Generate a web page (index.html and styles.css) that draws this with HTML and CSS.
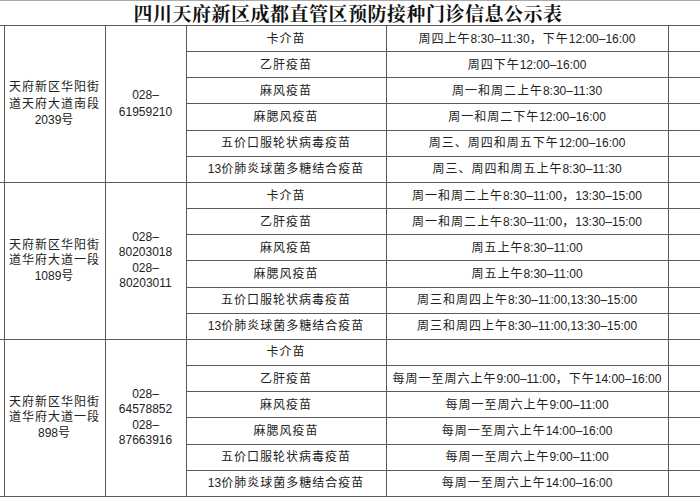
FILE: index.html
```html
<!DOCTYPE html>
<html lang="zh-CN">
<head>
<meta charset="utf-8">
<title>四川天府新区成都直管区预防接种门诊信息公示表</title>
<link rel="stylesheet" href="styles.css">
</head>
<body>
<div class="title">四川天府新区成都直管区预防接种门诊信息公示表</div>
<table class="grid">
<colgroup>
<col class="c0"><col class="c1"><col class="c2"><col class="c3"><col class="c4"><col class="c5">
</colgroup>
<tbody>
<tr class="gs">
<td class="pad" rowspan="6"></td>
<td class="addr a1" rowspan="6">天府新区华阳街<br>道天府大道南段<br><span class="n">2039</span>号</td>
<td class="tel t1" rowspan="6"><span class="n">028–<br>61959210</span></td>
<td>卡介苗</td><td>周四上午<span class="n">8:30–11:30</span>，下午<span class="n">12:00–16:00</span></td><td></td>
</tr>
<tr><td>乙肝疫苗</td><td>周四下午<span class="n">12:00–16:00</span></td><td></td></tr>
<tr><td>麻风疫苗</td><td>周一和周二上午<span class="n">8:30–11:30</span></td><td></td></tr>
<tr><td>麻腮风疫苗</td><td>周一和周二下午<span class="n">12:00–16:00</span></td><td></td></tr>
<tr><td>五价口服轮状病毒疫苗</td><td>周三、周四和周五下午<span class="n">12:00–16:00</span></td><td></td></tr>
<tr><td><span class="n">13</span>价肺炎球菌多糖结合疫苗</td><td>周三、周四和周五上午<span class="n">8:30–11:30</span></td><td></td></tr>

<tr class="gs">
<td class="pad" rowspan="6"></td>
<td class="addr" rowspan="6">天府新区华阳街<br>道华府大道一段<br><span class="n">1089</span>号</td>
<td class="tel" rowspan="6"><span class="n">028–<br>80203018<br>028–<br>80203011</span></td>
<td>卡介苗</td><td>周一和周二上午<span class="n">8:30–11:00</span>，<span class="n">13:30–15:00</span></td><td></td>
</tr>
<tr><td>乙肝疫苗</td><td>周一和周二上午<span class="n">8:30–11:00</span>，<span class="n">13:30–15:00</span></td><td></td></tr>
<tr><td>麻风疫苗</td><td>周五上午<span class="n">8:30–11:00</span></td><td></td></tr>
<tr><td>麻腮风疫苗</td><td>周五上午<span class="n">8:30–11:00</span></td><td></td></tr>
<tr><td>五价口服轮状病毒疫苗</td><td>周三和周四上午<span class="n">8:30–11:00,13:30–15:00</span></td><td></td></tr>
<tr><td><span class="n">13</span>价肺炎球菌多糖结合疫苗</td><td>周三和周四上午<span class="n">8:30–11:00,13:30–15:00</span></td><td></td></tr>

<tr class="gs">
<td class="pad" rowspan="6"></td>
<td class="addr" rowspan="6">天府新区华阳街<br>道华府大道一段<br><span class="n">898</span>号</td>
<td class="tel" rowspan="6"><span class="n">028–<br>64578852<br>028–<br>87663916</span></td>
<td>卡介苗</td><td></td><td></td>
</tr>
<tr><td>乙肝疫苗</td><td>每周一至周六上午<span class="n">9:00–11:00</span>，下午<span class="n">14:00–16:00</span></td><td></td></tr>
<tr><td>麻风疫苗</td><td>每周一至周六上午<span class="n">9:00–11:00</span></td><td></td></tr>
<tr><td>麻腮风疫苗</td><td>每周一至周六上午<span class="n">14:00–16:00</span></td><td></td></tr>
<tr><td>五价口服轮状病毒疫苗</td><td>每周一至周六上午<span class="n">9:00–11:00</span></td><td></td></tr>
<tr><td><span class="n">13</span>价肺炎球菌多糖结合疫苗</td><td>每周一至周六上午<span class="n">14:00–16:00</span></td><td></td></tr>
</tbody>
</table>
</body>
</html>
```

FILE: styles.css
```css
html, body {
  margin: 0;
  padding: 0;
  background: #ffffff;
}

body {
  width: 700px;
  height: 500px;
  overflow: hidden;
  font-family: "Liberation Sans", "Noto Sans CJK SC", sans-serif;
  color: #222222;
}

.title {
  box-sizing: border-box;
  height: 25px;
  border-top: 1px solid #aaaaaa;
  text-align: center;
  font-family: "Noto Serif CJK SC", "Noto Sans CJK SC", serif;
  font-weight: 700;
  font-size: 19px;
  line-height: 23px;
  letter-spacing: 0.5px;
  color: #111111;
  padding-right: 4px;
}

.grid {
  border-collapse: collapse;
  table-layout: fixed;
  width: 718px;
}

.c0 { width: 4px; }
.c1 { width: 101px; }
.c2 { width: 81px; }
.c3 { width: 200px; }
.c4 { width: 282px; }
.c5 { width: 50px; }

.grid td {
  border: 1px solid #5a5a5a;
  padding: 0;
  height: 25.17px;
  text-align: center;
  vertical-align: middle;
  font-size: 12px;
  line-height: 14px;
  letter-spacing: 1px;
  white-space: nowrap;
  overflow: hidden;
}

.grid td.pad {
  border-left: none;
  border-bottom-color: #5a5a5a;
}

.grid td.addr,
.grid td.tel {
  line-height: 15.5px;
}

.grid td.a1,
.grid td.t1 {
  line-height: 16.5px;
}

.n {
  letter-spacing: 0;
}
```
